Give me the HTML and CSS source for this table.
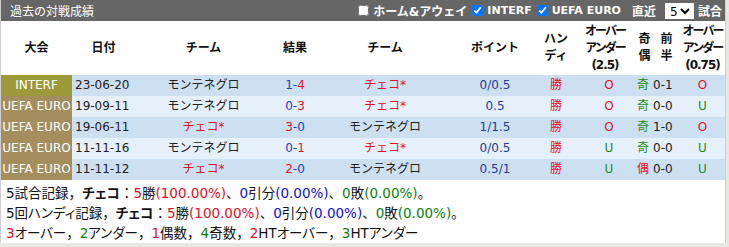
FILE: index.html
```html
<!DOCTYPE html>
<html lang="ja">
<head>
<meta charset="utf-8">
<title>過去の対戦成績</title>
<link rel="stylesheet" href="styles.css">
</head>
<body>
<div class="panel">
  <div class="titlebar">
    <span class="title">過去の対戦成績</span>
    <div class="controls">
      <label class="ctl"><input type="checkbox" class="chk">ホーム&amp;アウェイ</label>
      <label class="ctl"><input type="checkbox" class="chk" checked><span class="lat">INTERF</span></label>
      <label class="ctl"><input type="checkbox" class="chk" checked><span class="lat">UEFA EURO</span></label>
      <span class="ctl recent">直近</span>
      <select class="sel"><option>5</option><option>10</option><option>20</option></select>
      <span class="ctl">試合</span>
    </div>
  </div>
  <table class="h2h">
    <colgroup>
      <col class="c-lg"><col class="c-date"><col class="c-team1"><col class="c-res"><col class="c-team2"><col class="c-pt"><col class="c-hd"><col class="c-ou"><col class="c-oe"><col class="c-ht"><col class="c-ou2">
    </colgroup>
    <thead>
      <tr>
        <th>大会</th>
        <th>日付</th>
        <th>チーム</th>
        <th>結果</th>
        <th>チーム</th>
        <th>ポイント</th>
        <th>ハン<br>ディ</th>
        <th class="tight">オーバー<br>アンダー<br><span class="num">(2.5)</span></th>
        <th>奇<br>偶</th>
        <th>前<br>半</th>
        <th class="tight">オーバー<br>アンダー<br><span class="num">(0.75)</span></th>
      </tr>
    </thead>
    <tbody>
      <tr class="r-dark">
        <td class="lg lg-interf">INTERF</td>
        <td class="date">23-06-20</td>
        <td>モンテネグロ</td>
        <td><span class="b">1-</span><span class="r">4</span></td>
        <td class="r">チェコ*</td>
        <td class="pt">0/0.5</td>
        <td class="r">勝</td>
        <td class="r ou">O</td>
        <td class="g oe">奇</td>
        <td class="ht">0-1</td>
        <td class="r">O</td>
      </tr>
      <tr class="r-light">
        <td class="lg lg-euro">UEFA EURO</td>
        <td class="date">19-09-11</td>
        <td>モンテネグロ</td>
        <td><span class="b">0-</span><span class="r">3</span></td>
        <td class="r">チェコ*</td>
        <td class="pt">0.5</td>
        <td class="r">勝</td>
        <td class="r ou">O</td>
        <td class="g oe">奇</td>
        <td class="ht">0-0</td>
        <td class="g">U</td>
      </tr>
      <tr class="r-dark">
        <td class="lg lg-euro">UEFA EURO</td>
        <td class="date">19-06-11</td>
        <td class="r">チェコ*</td>
        <td><span class="r">3</span><span class="b">-0</span></td>
        <td>モンテネグロ</td>
        <td class="pt">1/1.5</td>
        <td class="r">勝</td>
        <td class="r ou">O</td>
        <td class="g oe">奇</td>
        <td class="ht">1-0</td>
        <td class="r">O</td>
      </tr>
      <tr class="r-light">
        <td class="lg lg-euro">UEFA EURO</td>
        <td class="date">11-11-16</td>
        <td>モンテネグロ</td>
        <td><span class="b">0-</span><span class="r">1</span></td>
        <td class="r">チェコ*</td>
        <td class="pt">0/0.5</td>
        <td class="r">勝</td>
        <td class="g ou">U</td>
        <td class="g oe">奇</td>
        <td class="ht">0-0</td>
        <td class="g">U</td>
      </tr>
      <tr class="r-dark">
        <td class="lg lg-euro">UEFA EURO</td>
        <td class="date">11-11-12</td>
        <td class="r">チェコ*</td>
        <td><span class="r">2</span><span class="b">-0</span></td>
        <td>モンテネグロ</td>
        <td class="pt">0.5/1</td>
        <td class="r">勝</td>
        <td class="g ou">U</td>
        <td class="r oe">偶</td>
        <td class="ht">0-0</td>
        <td class="g">U</td>
      </tr>
    </tbody>
  </table>
  <div class="stats">
    <div class="line">5試合記録，<b class="kn">チェコ</b>：<span class="sr">5</span>勝<span class="sr">(100.00%)</span>、<span class="sb">0</span>引分<span class="sb">(0.00%)</span>、<span class="sg">0</span>敗<span class="sg">(0.00%)</span>。</div>
    <div class="line">5回<span class="kn">ハンディ</span>記録，<b class="kn">チェコ</b>：<span class="sr">5</span>勝<span class="sr">(100.00%)</span>、<span class="sb">0</span>引分<span class="sb">(0.00%)</span>、<span class="sg">0</span>敗<span class="sg">(0.00%)</span>。</div>
    <div class="line"><span class="sr">3</span><span class="kn">オーバー</span>，<span class="sg">2</span><span class="kn">アンダー</span>，<span class="sr">1</span>偶数，<span class="sg">4</span>奇数，<span class="sr">2</span>HT<span class="kn">オーバー</span>，<span class="sg">3</span>HT<span class="kn">アンダー</span></div>
  </div>
</div>
</body>
</html>
```

FILE: styles.css
```css
html, body {
  margin: 0;
  padding: 0;
}
body {
  background: #e8e8e2;
  font-family: "DejaVu Sans", "Noto Sans CJK JP", sans-serif;
  font-size: 12px;
  color: #222;
}
.panel {
  width: 724px;
  background: #fff;
  border-left: 1px solid #cfcfcf;
  border-right: 1px solid #cfcfcf;
}
.titlebar {
  height: 21px;
  background: #666;
  color: #fff;
  display: flex;
  align-items: center;
  justify-content: space-between;
  padding: 0 3px 0 9px;
}
.title {
  font-size: 12px;
}
.controls {
  display: flex;
  align-items: center;
  font-weight: bold;
}
.ctl {
  display: flex;
  align-items: center;
}
.lat {
  font-size: 11px;
}
.chk {
  width: 11px;
  height: 11px;
  margin: 0 4px 0 5px;
}
.recent {
  margin-left: 11px;
}
.sel {
  margin: 0 4px 0 9px;
  height: 16px;
  width: 29px;
  font-size: 12px;
  font-family: "DejaVu Sans", sans-serif;
  padding: 0;
  border: 1px solid #fff;
  border-radius: 0;
  background: #fff;
  color: #000;
}
.h2h {
  width: 724px;
  table-layout: fixed;
  border-collapse: collapse;
  border-spacing: 0;
}
.c-lg { width: 71px; }
.c-date { width: 63px; }
.c-team1 { width: 137px; }
.c-res { width: 46px; }
.c-team2 { width: 134px; }
.c-pt { width: 86px; }
.c-hd { width: 36px; }
.c-ou { width: 62px; }
.c-oe { width: 17px; }
.c-ht { width: 27px; }
.c-ou2 { width: 45px; }
.h2h th {
  height: 54px;
  padding: 0;
  font-weight: bold;
  color: #111;
  line-height: 17px;
  text-align: center;
  vertical-align: middle;
  white-space: nowrap;
}
.h2h th.tight {
  letter-spacing: -2px;
  overflow: visible;
}
.h2h th.tight .num {
  letter-spacing: -1px;
}
.h2h td {
  height: 21px;
  padding: 0;
  text-align: center;
  white-space: nowrap;
  overflow: hidden;
  line-height: 21px;
}
.r-dark td { background: #cde0f2; }
.r-light td { background: #e6f0fa; }
.h2h td.lg {
  color: #fff;
  text-align: center;
}
.h2h td.lg-interf { background: #9c993a; }
.h2h td.lg-euro { background: #a48e5e; }
.h2h td.date {
  text-align: left;
  padding-left: 3px;
}
.h2h td.ou {
  padding-left: 8px;
}
.h2h td.oe {
  text-align: left;
  padding-left: 1px;
}
.h2h td.ht {
  text-align: left;
  color: #222;
}
.r { color: #e0102a; }
.b { color: #1f3fbf; }
.g { color: #1c8a1c; }
.pt { color: #1e3c9c; }
.stats {
  padding: 3px 5px 0 5px;
  font-size: 13.5px;
  line-height: 20px;
  color: #111;
}
.stats b {
  font-weight: bold;
}
.kn {
  font-feature-settings: "palt";
}
.sr { color: #e0102a; }
.sb { color: #1010d0; }
.sg { color: #0a800a; }
```
